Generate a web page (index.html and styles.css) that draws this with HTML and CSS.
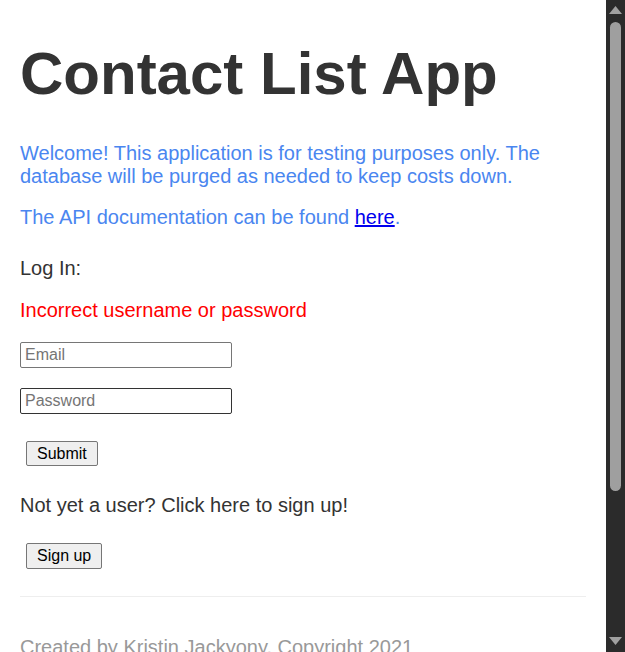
FILE: index.html
```html
<!DOCTYPE html>
<html lang="en">
<head>
<meta charset="utf-8">
<title>Contact List App</title>
<link rel="stylesheet" href="styles.css">
</head>
<body>
<div class="page">
  <h1 class="title">Contact List App</h1>
  <div class="welcome">
    <p class="welcome-text">Welcome! This application is for testing purposes only. The database will be purged as needed to keep costs down.</p>
    <p class="welcome-text api">The API documentation can be found <a class="link" href="#">here</a>.</p>
  </div>
  <p class="login-label">Log In:</p>
  <p class="error">Incorrect username or password</p>
  <form class="login-form">
    <input class="field" type="text" placeholder="Email">
    <input class="field field-pass" type="password" placeholder="Password">
    <button class="btn btn-submit" type="button">Submit</button>
  </form>
  <p class="signup-text">Not yet a user? Click here to sign up!</p>
  <button class="btn btn-signup" type="button">Sign up</button>
  <hr class="divider">
  <footer class="footer">Created by Kristin Jackyony, Copyright 2021</footer>
</div>
<div class="scrollbar" aria-hidden="true">
  <svg class="sb-arrow" width="19" height="20" viewBox="0 0 19 20"><polygon points="3,14 16,14 9.5,6" fill="#a0a0a0"/></svg>
  <div class="sb-thumb"></div>
  <div class="sb-space"></div>
  <svg class="sb-arrow" width="19" height="20" viewBox="0 0 19 20"><polygon points="3,5 16,5 9.5,13" fill="#a0a0a0"/></svg>
</div>
</body>
</html>
```

FILE: styles.css
```css
html, body {
  margin: 0;
  padding: 0;
  background: #fff;
}
body {
  font-family: "Liberation Sans", Arial, sans-serif;
  font-size: 20px;
  color: #333;
}
.page {
  margin-right: 19px;
  padding: 0 20px 200px;
}
.scrollbar {
  position: fixed;
  top: 0;
  right: 0;
  bottom: 0;
  width: 19px;
  background: #2b2b2b;
  display: flex;
  flex-direction: column;
  align-items: center;
}
.sb-arrow {
  display: block;
  flex: none;
}
.sb-thumb {
  flex: none;
  width: 11px;
  height: 469px;
  margin-top: 2px;
  border-radius: 6px;
  background: #9f9f9f;
}
.sb-space {
  flex: 1;
}
.title {
  font-size: 60px;
  font-weight: bold;
  line-height: 67px;
  margin: 40px 0 35px;
  color: #333;
}
.welcome-text {
  color: #4a86f0;
  margin: 0 0 18px;
  line-height: 23px;
}
.welcome .api {
  margin-bottom: 28px;
}
.link {
  color: #0000ee;
  text-decoration: underline;
}
.login-label {
  margin: 0 0 19px;
  line-height: 23px;
  color: #333;
}
.error {
  margin: 0 0 20px;
  line-height: 23px;
  color: #ff0000;
}
.login-form {
  display: flex;
  flex-direction: column;
  align-items: flex-start;
}
.field {
  box-sizing: border-box;
  width: 212px;
  height: 26px;
  margin: 0 0 20px;
  padding: 1px 4px;
  border: 1px solid #767676;
  border-radius: 2px;
  font-family: "Liberation Sans", Arial, sans-serif;
  font-size: 16px;
  color: #000;
  background: #fff;
}
.field::placeholder {
  color: #757575;
}
.field-pass {
  border-color: #333;
  margin-bottom: 27px;
}
.btn {
  box-sizing: border-box;
  height: 25px;
  margin-left: 6px;
  padding: 0 10px;
  border: 1px solid #767676;
  border-radius: 2px;
  background: #efefef;
  font-family: "Liberation Sans", Arial, sans-serif;
  font-size: 16px;
  color: #000;
  line-height: 18px;
}
.btn-signup {
  height: 26px;
  display: block;
}
.signup-text {
  margin: 28px 0 26px;
  line-height: 23px;
  color: #333;
}
.divider {
  margin: 27px 0 0;
  border: 0;
  border-top: 1px solid #eee;
  height: 0;
}
.footer {
  margin-top: 39px;
  line-height: 23px;
  color: #999;
}
```
